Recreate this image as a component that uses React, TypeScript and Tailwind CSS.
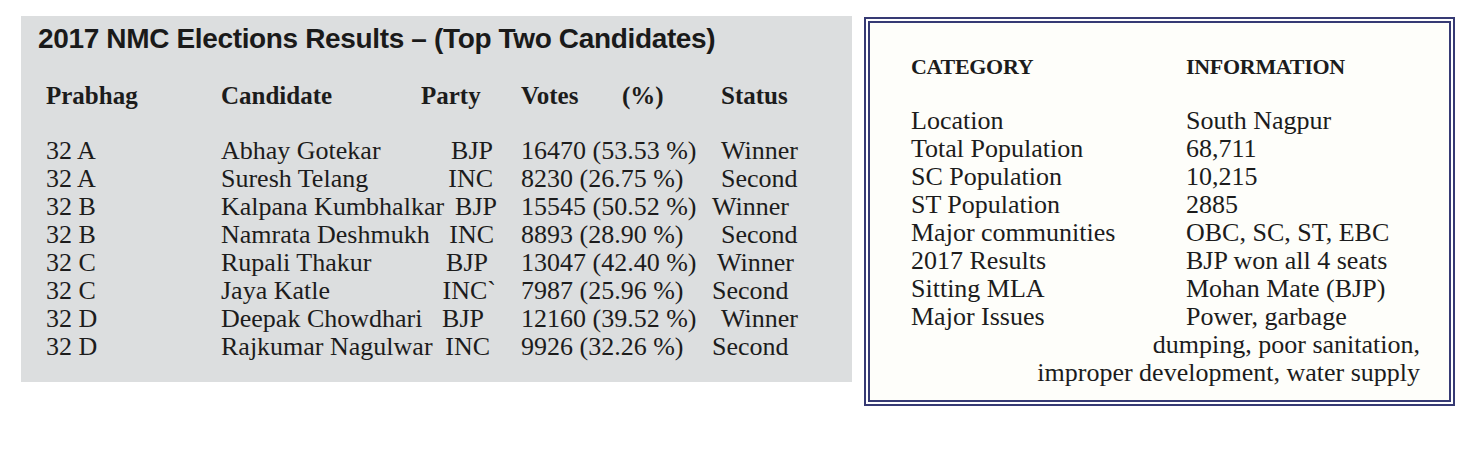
const rows = [
  { ward: "32 A", name: "Abhay Gotekar", party: "BJP", partyCls: "", votes: "16470 (53.53 %)", status: "Winner", statusCls: "" },
  { ward: "32 A", name: "Suresh Telang", party: "INC", partyCls: "", votes: "8230 (26.75 %)", status: "Second", statusCls: "" },
  { ward: "32 B", name: "Kalpana Kumbhalkar", party: "BJP", partyCls: "-mr-[4px]", votes: "15545 (50.52 %)", status: "Winner", statusCls: "-ml-[9px]" },
  { ward: "32 B", name: "Namrata Deshmukh", party: "INC", partyCls: "-mr-[1px]", votes: "8893 (28.90 %)", status: "Second", statusCls: "" },
  { ward: "32 C", name: "Rupali Thakur", party: "BJP", partyCls: "mr-[5px]", votes: "13047 (42.40 %)", status: "Winner", statusCls: "-ml-[4px]" },
  { ward: "32 C", name: "Jaya Katle", party: "INC`", partyCls: "-mr-[3px]", votes: "7987 (25.96 %)", status: "Second", statusCls: "-ml-[9px]" },
  { ward: "32 D", name: "Deepak Chowdhari", party: "BJP", partyCls: "mr-[9px]", votes: "12160 (39.52 %)", status: "Winner", statusCls: "" },
  { ward: "32 D", name: "Rajkumar Nagulwar", party: "INC", partyCls: "mr-[3px]", votes: "9926 (32.26 %)", status: "Second", statusCls: "-ml-[9px]" },
];

const info = [
  ["Location", "South Nagpur"],
  ["Total Population", "68,711"],
  ["SC Population", "10,215"],
  ["ST Population", "2885"],
  ["Major communities", "OBC, SC, ST, EBC"],
  ["2017 Results", "BJP won all 4 seats"],
  ["Sitting MLA", "Mohan Mate (BJP)"],
  ["Major Issues", "Power, garbage"],
];

const serif = "font-[family-name:'Liberation_Serif','Times_New_Roman',serif]";

function ResultsPanel() {
  return (
    <div className="ml-[21px] mt-[16px] h-[366px] w-[831px] bg-[#dcdedf] pt-[7px] text-[#1c1c1c]">
      <h1 className="pl-[17px] font-[family-name:'Liberation_Sans',Arial,sans-serif] text-[28px] font-bold leading-[32px] tracking-[-0.35px] text-[#1a1a1a]">
        2017 NMC Elections Results – (Top Two Candidates)
      </h1>

      <div className={`${serif} mt-[27px] flex pl-[25px] text-[25px] font-bold leading-[28px]`}>
        <div className="w-[175px]">Prabhag</div>
        <div className="w-[200px]">Candidate</div>
        <div className="w-[100px]">Party</div>
        <div className="w-[101px]">Votes</div>
        <div className="w-[99px]">(%)</div>
        <div>Status</div>
      </div>

      <div className={`${serif} mt-[27px] pl-[25px] text-[26px] leading-[28px]`}>
        {rows.map((r, i) => (
          <div key={i} className="flex whitespace-nowrap">
            <div className="w-[175px]">{r.ward}</div>
            <div className="flex w-[272px] justify-between">
              <span>{r.name}</span>
              <span className={r.partyCls}>{r.party}</span>
            </div>
            <div className="ml-[28px] w-[200px]">{r.votes}</div>
            <div className={r.statusCls}>{r.status}</div>
          </div>
        ))}
      </div>
    </div>
  );
}

function InfoBox() {
  return (
    <div className="ml-[12px] mt-[17px] h-[389px] w-[591px] border-2 border-[#363a74] bg-white p-[2px]">
      <div className={`${serif} h-full border-2 border-[#363a74] bg-[#fefefa] pl-[41px] pr-[29px] pt-[30px] text-[#1c1c1c]`}>
        <div className="flex text-[22px] font-bold leading-[28px] tracking-[-0.3px]">
          <div className="w-[275px]">CATEGORY</div>
          <div>INFORMATION</div>
        </div>
        <div className="mt-[26px] text-[26px] leading-[28px]">
          {info.map(([k, v]) => (
            <div key={k} className="flex whitespace-nowrap">
              <div className="w-[275px]">{k}</div>
              <div>{v}</div>
            </div>
          ))}
          <div className="text-right whitespace-nowrap">dumping, poor sanitation,</div>
          <div className="text-right whitespace-nowrap">improper development, water supply</div>
        </div>
      </div>
    </div>
  );
}

export default function App() {
  return (
    <div className="flex h-[463px] w-[1481px] items-start bg-white">
      <ResultsPanel />
      <InfoBox />
    </div>
  );
}
